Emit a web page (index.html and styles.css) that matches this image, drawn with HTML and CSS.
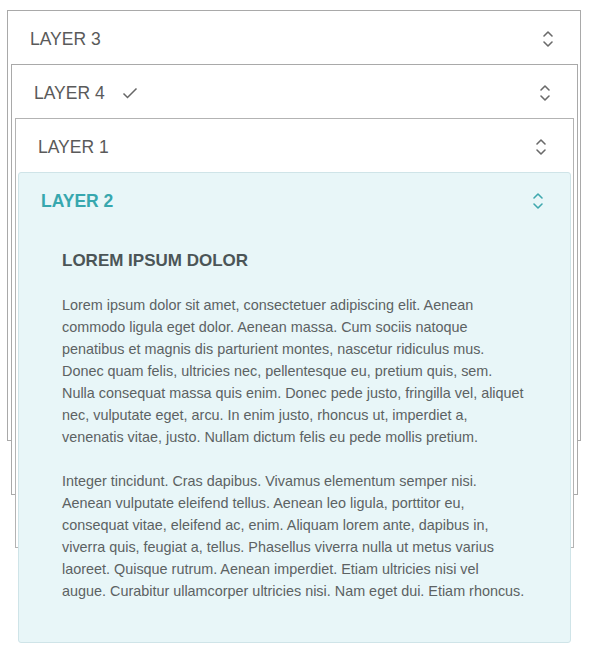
FILE: index.html
```html
<!DOCTYPE html>
<html lang="en">
<head>
<meta charset="utf-8">
<title>Layers</title>
<link rel="stylesheet" href="styles.css">
</head>
<body>
<div class="stack">
  <section class="card card-3">
    <header class="head">
      <span class="title">LAYER 3</span>
      <svg class="chev" viewBox="0 0 12 20" width="12" height="20"><path d="M2 7l4-4 4 4M2 13l4 4 4-4"/></svg>
    </header>
  </section>
  <section class="card card-4">
    <header class="head">
      <span class="title">LAYER 4</span>
      <svg class="check" viewBox="0 0 16 12" width="16" height="12"><path d="M1.5 6.5l4 4 9-9"/></svg>
      <svg class="chev" viewBox="0 0 12 20" width="12" height="20"><path d="M2 7l4-4 4 4M2 13l4 4 4-4"/></svg>
    </header>
  </section>
  <section class="card card-1">
    <header class="head">
      <span class="title">LAYER 1</span>
      <svg class="chev" viewBox="0 0 12 20" width="12" height="20"><path d="M2 7l4-4 4 4M2 13l4 4 4-4"/></svg>
    </header>
  </section>
  <section class="card card-2 active">
    <header class="head">
      <span class="title">LAYER 2</span>
      <svg class="chev" viewBox="0 0 12 20" width="12" height="20"><path d="M2 7l4-4 4 4M2 13l4 4 4-4"/></svg>
    </header>
    <div class="content">
      <h2 class="content-title">LOREM IPSUM DOLOR</h2>
      <p>Lorem ipsum dolor sit amet, consectetuer adipiscing elit. Aenean commodo ligula eget dolor. Aenean massa. Cum sociis natoque penatibus et magnis dis parturient montes, nascetur ridiculus mus. Donec quam felis, ultricies nec, pellentesque eu, pretium quis, sem. Nulla consequat massa quis enim. Donec pede justo, fringilla vel, aliquet nec, vulputate eget, arcu. In enim justo, rhoncus ut, imperdiet a, venenatis vitae, justo. Nullam dictum felis eu pede mollis pretium.</p>
      <p>Integer tincidunt. Cras dapibus. Vivamus elementum semper nisi. Aenean vulputate eleifend tellus. Aenean leo ligula, porttitor eu, consequat vitae, eleifend ac, enim. Aliquam lorem ante, dapibus in, viverra quis, feugiat a, tellus. Phasellus viverra nulla ut metus varius laoreet. Quisque rutrum. Aenean imperdiet. Etiam ultricies nisi vel augue. Curabitur ullamcorper ultricies nisi. Nam eget dui. Etiam rhoncus.</p>
    </div>
  </section>
</div>
</body>
</html>
```
FILE: styles.css
```css
html, body {
  margin: 0;
  padding: 0;
  background: #ffffff;
}

body {
  font-family: "Liberation Sans", Arial, sans-serif;
  color: #595959;
}

.stack {
  display: flex;
  flex-direction: column;
  padding-top: 10px;
}

.card {
  box-sizing: border-box;
  background: #ffffff;
  border: 1px solid #a9a9a9;
}

.card-3 {
  margin: 0 9px 0 7px;
  height: 431px;
}

.card-4 {
  margin: -377px 12px 0 11px;
  height: 431px;
}

.card-1 {
  margin: -377px 16px 0 15px;
  height: 430px;
  border-color: #b3b3b3;
}

.card-2 {
  margin: -376px 19px 0 18px;
  background: #e8f6f8;
  border-color: #cfe4e8;
  border-radius: 3px;
}

.head {
  box-sizing: border-box;
  height: 53px;
  display: flex;
  align-items: center;
  padding: 3px 26px 0 22px;
}

.title {
  font-size: 17.5px;
  color: #5a5a5a;
}

.check {
  margin-left: 17px;
  fill: none;
  stroke: #666666;
  stroke-width: 1.5;
}

.chev {
  margin-left: auto;
  fill: none;
  stroke: #6a6a6a;
  stroke-width: 1.6;
  stroke-linecap: round;
  stroke-linejoin: round;
}

.active .title {
  font-weight: bold;
  color: #37a7ae;
}

.active .chev {
  stroke: #3fa8ae;
}

.content {
  padding: 24px 45px 40px 43px;
}

.content-title {
  margin: 0 0 22px;
  font-size: 17px;
  font-weight: bold;
  color: #4b5557;
  line-height: 22px;
}

.content p {
  margin: 0 0 22px;
  font-size: 14.4px;
  line-height: 22px;
  color: #5c6263;
}

.content p:last-child {
  margin-bottom: 0;
}
```
